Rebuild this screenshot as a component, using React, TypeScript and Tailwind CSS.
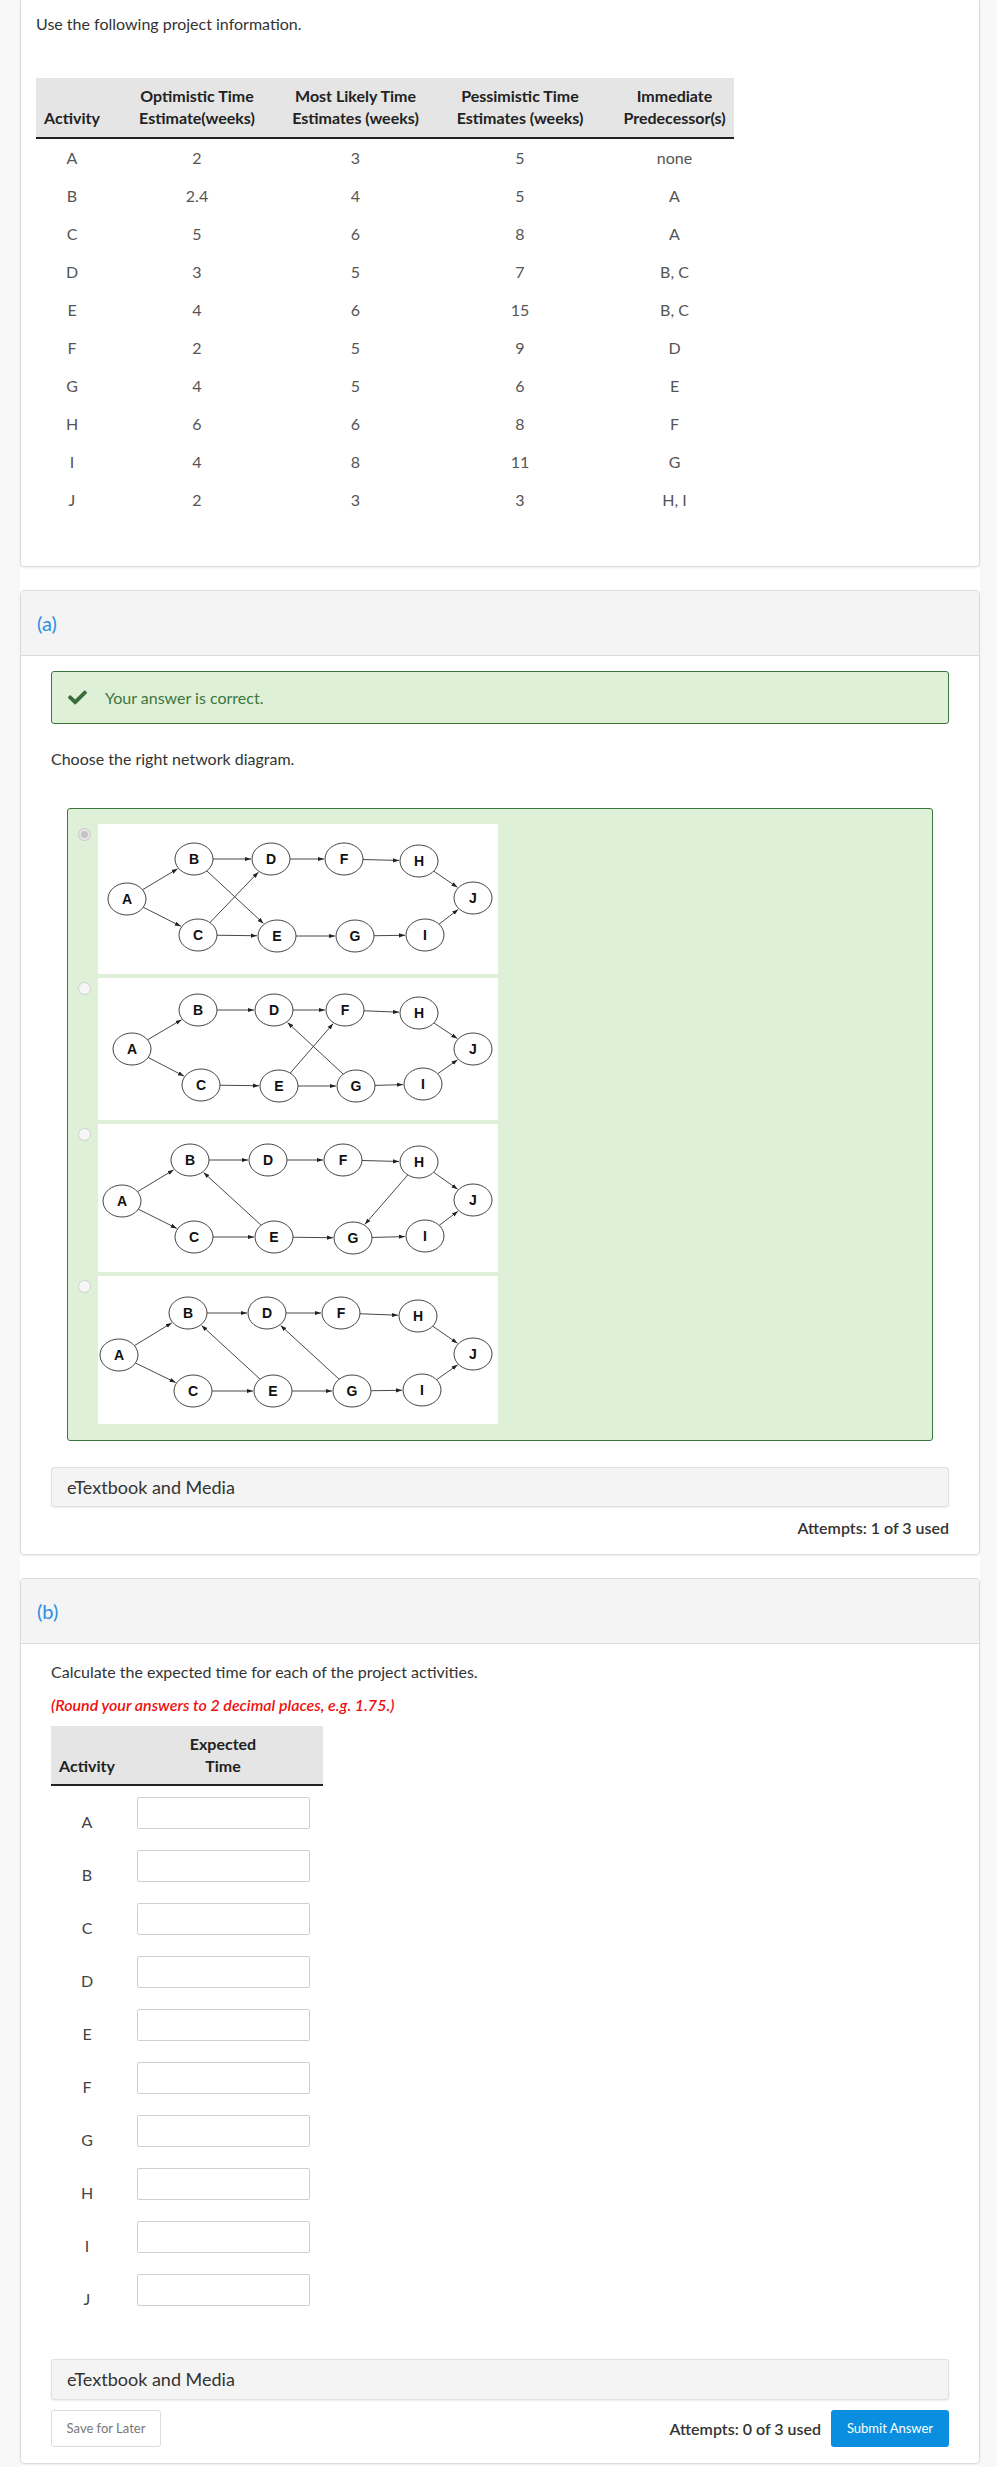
import React from "react";
import { FaCheck } from "react-icons/fa";

type GNode = { id: string; x: number; y: number; rx?: number; ry?: number };

const projectRows = [
  ["A", "2", "3", "5", "none"],
  ["B", "2.4", "4", "5", "A"],
  ["C", "5", "6", "8", "A"],
  ["D", "3", "5", "7", "B, C"],
  ["E", "4", "6", "15", "B, C"],
  ["F", "2", "5", "9", "D"],
  ["G", "4", "5", "6", "E"],
  ["H", "6", "6", "8", "F"],
  ["I", "4", "8", "11", "G"],
  ["J", "2", "3", "3", "H, I"],
];

const mk = (list: [string, number, number][]): GNode[] =>
  list.map(([id, x, y]) => ({ id, x, y }));

const diagrams: { height: number; nodes: GNode[]; edges: [string, string][] }[] = [
  {
    height: 150,
    nodes: mk([
      ["A", 29, 75], ["B", 96, 35], ["D", 173, 35], ["F", 246, 35], ["H", 321, 37],
      ["J", 375, 74], ["C", 100, 111], ["E", 179, 112], ["G", 257, 112], ["I", 327, 111],
    ]),
    edges: [
      ["A", "B"], ["A", "C"], ["B", "D"], ["B", "E"], ["C", "D"], ["C", "E"],
      ["D", "F"], ["F", "H"], ["H", "J"], ["E", "G"], ["G", "I"], ["I", "J"],
    ],
  },
  {
    height: 142,
    nodes: mk([
      ["A", 34, 71], ["B", 100, 32], ["D", 176, 32], ["F", 247, 32], ["H", 321, 35],
      ["J", 375, 71], ["C", 103, 107], ["E", 181, 108], ["G", 258, 108], ["I", 325, 106],
    ]),
    edges: [
      ["A", "B"], ["A", "C"], ["B", "D"], ["D", "F"], ["F", "H"], ["H", "J"],
      ["C", "E"], ["E", "F"], ["G", "D"], ["E", "G"], ["G", "I"], ["I", "J"],
    ],
  },
  {
    height: 148,
    nodes: mk([
      ["A", 24, 77], ["B", 92, 36], ["D", 170, 36], ["F", 245, 36], ["H", 321, 38],
      ["J", 375, 76], ["C", 96, 113], ["E", 176, 113], ["G", 255, 114], ["I", 327, 112],
    ]),
    edges: [
      ["A", "B"], ["A", "C"], ["B", "D"], ["D", "F"], ["F", "H"], ["H", "J"],
      ["C", "E"], ["E", "B"], ["H", "G"], ["E", "G"], ["G", "I"], ["I", "J"],
    ],
  },
  {
    height: 148,
    nodes: mk([
      ["A", 21, 79], ["B", 90, 37], ["D", 169, 37], ["F", 243, 37], ["H", 320, 40],
      ["J", 375, 78], ["C", 95, 115], ["E", 175, 115], ["G", 254, 115], ["I", 324, 114],
    ]),
    edges: [
      ["A", "B"], ["A", "C"], ["B", "D"], ["D", "F"], ["F", "H"], ["H", "J"],
      ["C", "E"], ["E", "B"], ["G", "D"], ["E", "G"], ["G", "I"], ["I", "J"],
    ],
  },
];

const RX = 19;
const RY = 16;

function boundary(ux: number, uy: number) {
  return 1 / Math.sqrt((ux / RX) ** 2 + (uy / RY) ** 2);
}

function Diagram({ uid, height, nodes, edges }: { uid: number; height: number; nodes: GNode[]; edges: [string, string][] }) {
  const byId: Record<string, GNode> = {};
  nodes.forEach((n) => (byId[n.id] = n));

  return (
    <svg width={400} height={height} viewBox={`0 0 400 ${height}`} className="block bg-white">
      <defs>
        <marker
          id={`ah-${uid}`}
          viewBox="0 0 10 10"
          refX="10"
          refY="5"
          markerWidth="6"
          markerHeight="6"
          markerUnits="userSpaceOnUse"
          orient="auto"
        >
          <path d="M0,1.5 L10,5 L0,8.5 z" fill="#222" />
        </marker>
      </defs>
      {edges.map(([from, to]) => {
        const a = byId[from];
        const b = byId[to];
        const dx = b.x - a.x;
        const dy = b.y - a.y;
        const len = Math.sqrt(dx * dx + dy * dy);
        const ux = dx / len;
        const uy = dy / len;
        const r = boundary(ux, uy);
        return (
          <line
            key={from + to}
            x1={a.x + ux * r}
            y1={a.y + uy * r}
            x2={b.x - ux * (r + 1)}
            y2={b.y - uy * (r + 1)}
            stroke="#333"
            strokeWidth={0.9}
            markerEnd={`url(#ah-${uid})`}
          />
        );
      })}
      {nodes.map((n) => (
        <g key={n.id}>
          <ellipse cx={n.x} cy={n.y} rx={RX} ry={RY} fill="#fff" stroke="#444" strokeWidth={1} />
          <text
            x={n.x}
            y={n.y + 5}
            textAnchor="middle"
            fontSize={14}
            fontWeight={700}
            fontFamily="'Liberation Sans', Arial, sans-serif"
            fill="#111"
          >
            {n.id}
          </text>
        </g>
      ))}
    </svg>
  );
}

function Radio({ checked }: { checked?: boolean }) {
  return (
    <div
      className={
        checked
          ? "w-[13px] h-[13px] rounded-full border border-[#c8c8c8] bg-[#e6e6e6] flex items-center justify-center"
          : "w-[13px] h-[13px] rounded-full border border-[#d0d0d0] bg-[#f6f6f6]"
      }
    >
      {checked && <div className="w-[7px] h-[7px] rounded-full bg-[#c4c4c4]" />}
    </div>
  );
}

function PartHeader({ label }: { label: string }) {
  return (
    <div className="h-[65px] bg-[#f4f4f4] border-b border-[#dcdcdc] flex items-center pl-[16px]">
      <span className="text-[20px] text-[#2b8fe3]">{label}</span>
    </div>
  );
}

function MediaBar({ h }: { h: string }) {
  return (
    <div
      className={`${h} bg-[#f4f4f4] border border-[#e0e0e0] rounded-[3px] shadow-[0_1px_2px_rgba(0,0,0,0.08)] flex items-center pl-[15px] text-[18px] text-[#333]`}
    >
      eTextbook and Media
    </div>
  );
}

export default function App() {
  return (
    <div className="min-h-screen bg-[#f8f8f8] font-['Lato','Noto_Sans',sans-serif] text-[#333]">
      <div className="ml-[20px] w-[960px] bg-white pb-[3px]">
        {/* project information */}
        <div className="border-x border-b border-[#dcdcdc] rounded-b-[4px] shadow-[0_1px_2px_rgba(0,0,0,0.08)] px-[15px] pt-3 pb-[47px]">
          <p className="text-[16px] leading-6">Use the following project information.</p>

          <div className="mt-[42px] w-[698px]">
            <div className="grid grid-cols-[72px_178px_139px_190px_119px] bg-[#e5e5e5] border-b-2 border-[#222] h-[61px] pb-[8px] items-end text-[16px] leading-[22px] font-bold text-center text-[#222]">
              <div>Activity</div>
              <div>
                Optimistic Time
                <br />
                Estimate(weeks)
              </div>
              <div>
                Most Likely Time
                <br />
                Estimates (weeks)
              </div>
              <div>
                Pessimistic Time
                <br />
                Estimates (weeks)
              </div>
              <div>
                Immediate
                <br />
                Predecessor(s)
              </div>
            </div>
            {projectRows.map((row) => (
              <div
                key={row[0]}
                className="grid grid-cols-[72px_178px_139px_190px_119px] h-[38px] items-center text-center text-[16px] text-[#555]"
              >
                {row.map((cell, i) => (
                  <div key={i}>{cell}</div>
                ))}
              </div>
            ))}
          </div>
        </div>

        {/* part (a) */}
        <div className="mt-[23px] border border-[#dcdcdc] rounded-[4px] shadow-[0_1px_2px_rgba(0,0,0,0.08)] overflow-hidden">
          <PartHeader label="(a)" />
          <div className="px-[30px] pt-[15px] pb-[14px]">
            <div className="h-[53px] bg-[#dff0d8] border border-[#3c763d] rounded-[3px] flex items-center pl-[16px] gap-[18px] text-[#3c763d] text-[16px]">
              <FaCheck size={19} className="text-[#3c6e3c]" />
              <span>Your answer is correct.</span>
            </div>

            <p className="mt-[23px] text-[16px] leading-6">Choose the right network diagram.</p>

            <div className="mt-[37px] mx-4 bg-[#dff0d8] border border-[#3c763d] rounded-[3px] pt-[15px] pb-[16px] flex flex-col gap-1">
              {diagrams.map((d, i) => (
                <div key={i} className="flex">
                  <div className="w-[30px] pl-[10px] pt-[4px]">
                    <Radio checked={i === 0} />
                  </div>
                  <Diagram uid={i} height={d.height} nodes={d.nodes} edges={d.edges} />
                </div>
              ))}
            </div>

            <div className="mt-[26px]">
              <MediaBar h="h-[40px]" />
            </div>

            <div className="mt-[9px] text-right text-[16px] leading-6 font-semibold text-[#333]">
              Attempts: 1 of 3 used
            </div>
          </div>
        </div>

        {/* part (b) */}
        <div className="mt-[23px] border border-[#dcdcdc] rounded-[4px] shadow-[0_1px_2px_rgba(0,0,0,0.08)] overflow-hidden">
          <PartHeader label="(b)" />
          <div className="px-[30px] pt-[16px] pb-[16px]">
            <p className="text-[16px] leading-6">Calculate the expected time for each of the project activities.</p>
            <p className="mt-[9px] text-[16px] leading-6 italic font-semibold text-[#ee1111]">
              (Round your answers to 2 decimal places, e.g. 1.75.)
            </p>

            <div className="mt-[9px] w-[272px]">
              <div className="grid grid-cols-[72px_200px] bg-[#e5e5e5] border-b-2 border-[#222] h-[60px] pb-[7px] items-end text-[16px] leading-[22px] font-bold text-center text-[#222]">
                <div>Activity</div>
                <div>
                  Expected
                  <br />
                  Time
                </div>
              </div>
              {projectRows.map((row) => (
                <div key={row[0]} className="flex h-[53px]">
                  <div className="w-[72px] text-center pt-[24px] text-[16px] leading-6 text-[#444]">{row[0]}</div>
                  <input
                    type="text"
                    aria-label={`Expected time ${row[0]}`}
                    className="ml-[14px] mt-[11px] w-[173px] h-[32px] border border-[#cfcfcf] rounded-[2px] bg-white outline-none"
                  />
                </div>
              ))}
            </div>

            <div className="mt-[43px]">
              <MediaBar h="h-[41px]" />
            </div>

            <div className="mt-[10px] flex items-center">
              <button className="w-[110px] h-[37px] border border-[#dcdcdc] rounded-[3px] bg-white text-[13px] text-[#777]">
                Save for Later
              </button>
              <div className="flex-1" />
              <span className="mr-[10px] text-[16px] font-semibold text-[#333]">Attempts: 0 of 3 used</span>
              <button className="w-[118px] h-[37px] rounded-[3px] bg-[#0a8fe0] text-white text-[13px]">
                Submit Answer
              </button>
            </div>
          </div>
        </div>
      </div>
    </div>
  );
}
